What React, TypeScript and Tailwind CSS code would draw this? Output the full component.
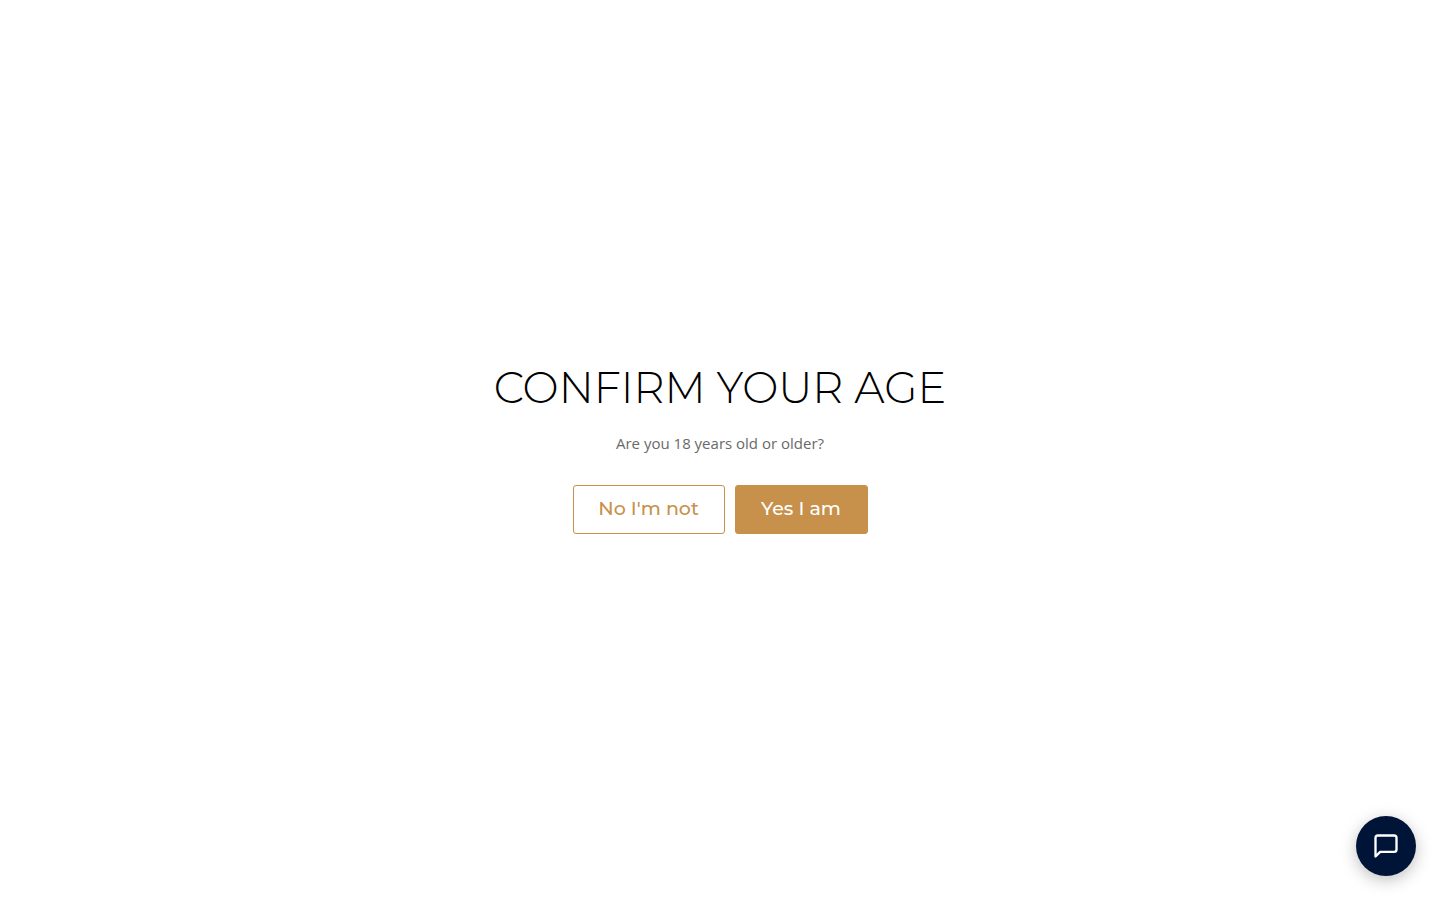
import React from 'react';

const AgeGate: React.FC = () => {
    return (
        <main className="flex min-h-screen flex-col items-center justify-center bg-white pb-1.5 text-center">
            <h1 className="font-['Montserrat','Open_Sans',sans-serif] text-[43px] leading-[54px] font-light text-black">
                CONFIRM YOUR AGE
            </h1>
            <p className="mt-4 font-['Open_Sans',sans-serif] text-[15px] leading-6 text-[#696969]">
                Are you 18 years old or older?
            </p>
            <div className="mt-[30px] flex gap-[10px] font-['Montserrat','Open_Sans',sans-serif] text-[19px] leading-7 font-medium">
                <button
                    type="button"
                    className="h-[49px] w-[152px] rounded-[3px] border border-[#c7914b] bg-white text-[#c7914b]"
                >
                    No I'm not
                </button>
                <button
                    type="button"
                    className="h-[49px] w-[133px] rounded-[3px] border border-[#c7914b] bg-[#c7914b] text-white"
                >
                    Yes I am
                </button>
            </div>
        </main>
    );
};

const ChatButton: React.FC = () => {
    return (
        <button
            type="button"
            aria-label="Open chat"
            className="fixed right-6 bottom-6 flex size-[60px] items-center justify-center rounded-full bg-[#001438] text-white shadow-[0_4px_16px_rgba(0,0,0,0.25)]"
        >
            <svg
                className="size-7"
                viewBox="0 0 24 24"
                fill="none"
                stroke="currentColor"
                strokeWidth="2"
                strokeLinecap="round"
                strokeLinejoin="round"
                aria-hidden="true"
            >
                <path d="M21 15a2 2 0 0 1-2 2H7l-4 4V5a2 2 0 0 1 2-2h14a2 2 0 0 1 2 2z" />
            </svg>
        </button>
    );
};

export default function App() {
    return (
        <>
            <AgeGate />
            <ChatButton />
        </>
    );
}
